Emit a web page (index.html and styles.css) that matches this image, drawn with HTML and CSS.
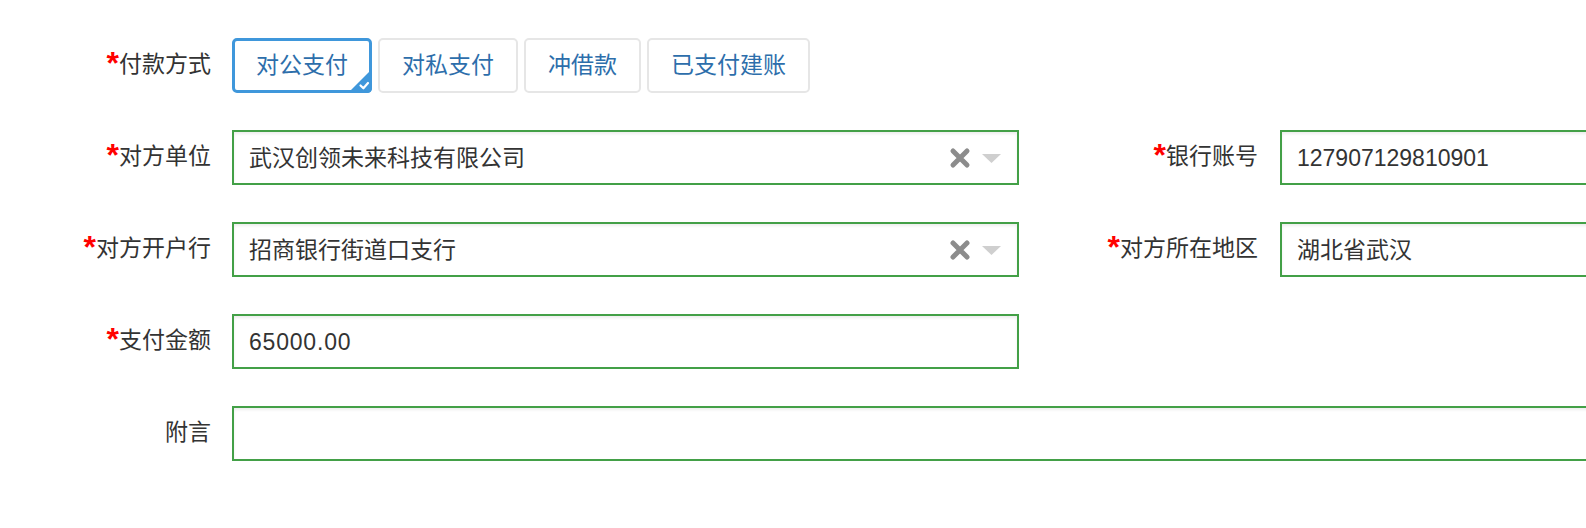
FILE: index.html
```html
<!DOCTYPE html>
<html lang="zh-CN">
<head>
<meta charset="utf-8">
<title>付款信息</title>
<link rel="stylesheet" href="styles.css">
</head>
<body>
<form class="form">
  <div class="row">
    <div class="field">
      <label class="label"><span class="req">*</span>付款方式</label>
      <div class="btn-group">
        <button type="button" class="opt active">对公支付<span class="corner"><svg viewBox="0 0 24 24" width="24" height="24"><path d="M24 0 L24 19 Q24 24 19 24 L0 24 Z" fill="#3f97db"/><path d="M12.5 16.5 L15.4 19.3 L20 14" fill="none" stroke="#fff" stroke-width="2.2" stroke-linecap="round" stroke-linejoin="round"/></svg></span></button>
        <button type="button" class="opt">对私支付</button>
        <button type="button" class="opt">冲借款</button>
        <button type="button" class="opt">已支付建账</button>
      </div>
    </div>
  </div>

  <div class="row">
    <div class="field">
      <label class="label"><span class="req">*</span>对方单位</label>
      <div class="control select">
        <span class="value">武汉创领未来科技有限公司</span>
        <span class="clear"><svg viewBox="0 0 22 22" width="22" height="22"><path d="M4 4 L18 18 M18 4 L4 18" stroke="#8c8c8c" stroke-width="5" stroke-linecap="round"/></svg></span>
        <span class="caret"><svg viewBox="0 0 19 9" width="19" height="9"><path d="M0 0 L19 0 L9.5 9 Z" fill="#cfcfcf"/></svg></span>
      </div>
    </div>
    <div class="field right">
      <label class="label"><span class="req">*</span>银行账号</label>
      <div class="control"><span class="value">127907129810901</span></div>
    </div>
  </div>

  <div class="row">
    <div class="field">
      <label class="label"><span class="req">*</span>对方开户行</label>
      <div class="control select">
        <span class="value">招商银行街道口支行</span>
        <span class="clear"><svg viewBox="0 0 22 22" width="22" height="22"><path d="M4 4 L18 18 M18 4 L4 18" stroke="#8c8c8c" stroke-width="5" stroke-linecap="round"/></svg></span>
        <span class="caret"><svg viewBox="0 0 19 9" width="19" height="9"><path d="M0 0 L19 0 L9.5 9 Z" fill="#cfcfcf"/></svg></span>
      </div>
    </div>
    <div class="field right">
      <label class="label"><span class="req">*</span>对方所在地区</label>
      <div class="control"><span class="value">湖北省武汉</span></div>
    </div>
  </div>

  <div class="row">
    <div class="field">
      <label class="label"><span class="req">*</span>支付金额</label>
      <div class="control"><span class="value num">65000.00</span></div>
    </div>
  </div>

  <div class="row">
    <div class="field wide">
      <label class="label">附言</label>
      <div class="control"></div>
    </div>
  </div>
</form>
</body>
</html>
```

FILE: styles.css
```css
html, body {
  margin: 0;
  padding: 0;
  background: #fff;
  overflow: hidden;
}

body {
  font-family: "Liberation Sans", "Noto Sans CJK SC", sans-serif;
  font-size: 23px;
  color: #333;
}

.form {
  width: 2200px;
  padding-top: 38px;
  display: flex;
  flex-direction: column;
  gap: 37px;
}

.row {
  display: flex;
  align-items: flex-start;
}

.field {
  display: flex;
  align-items: flex-start;
}

.label {
  box-sizing: border-box;
  width: 232px;
  padding-right: 21px;
  padding-top: 10px;
  text-align: right;
  line-height: 32px;
  color: #333;
  white-space: nowrap;
}

.field.right .label {
  width: 261px;
  padding-right: 22px;
}

.req {
  color: #f00;
  font-weight: bold;
  font-size: 32px;
  line-height: 0;
  vertical-align: -2px;
}

.btn-group {
  display: flex;
  gap: 6px;
}

.opt {
  position: relative;
  box-sizing: border-box;
  height: 55px;
  padding: 0 22px;
  border: 2px solid #e6e6e6;
  border-radius: 5px;
  background: #fff;
  color: #2d6eab;
  font-family: inherit;
  font-size: 23px;
  line-height: 1;
  cursor: pointer;
}

.opt.active {
  border: 3px solid #3f97db;
  padding: 0 21px;
}

.corner {
  position: absolute;
  right: -3px;
  bottom: -3px;
  width: 24px;
  height: 24px;
  display: block;
}

.corner svg {
  display: block;
}

.control {
  box-sizing: border-box;
  width: 787px;
  height: 55px;
  border: 2px solid #43a047;
  background: #fff;
  box-shadow: inset 0 2px 3px rgba(0, 0, 0, 0.07);
  display: flex;
  align-items: center;
  padding: 0 15px;
  color: #333;
}

.field.wide .control {
  width: 1835px;
}

.control .value {
  flex: 1;
  white-space: nowrap;
  line-height: 32px;
}

.control .num {
  letter-spacing: 0.8px;
}

.select .clear {
  display: flex;
  margin-right: 11px;
}

.select .caret {
  display: flex;
  margin-right: 1px;
  margin-top: 2px;
}
```
